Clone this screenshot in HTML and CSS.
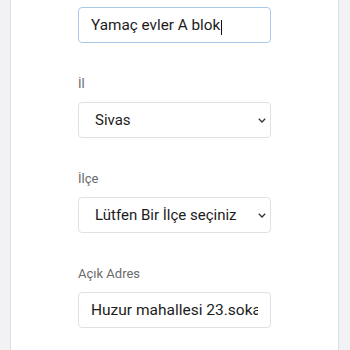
FILE: index.html
```html
<!DOCTYPE html>
<html lang="tr">
<head>
    <meta charset="UTF-8">
    <meta name="viewport" content="width=device-width, initial-scale=1.0">
    <title>Adres Bilgileri</title>
    <link rel="stylesheet" href="styles.css">
</head>
<body>

    <div class="sayfa">
        <div class="alan">
            <div class="secim">
                <input type="text" class="kutu aktif" value="Yamaç evler A blok">
                <span class="imlec"></span>
            </div>
        </div>

        <div class="alan">
            <label for="il">İl</label>
            <div class="secim">
                <select id="il" class="kutu">
                    <option>Sivas</option>
                    <option>Ankara</option>
                    <option>İstanbul</option>
                </select>
                <svg class="ok" width="8" height="5" viewBox="0 0 8 5"><path d="M0.8 0.8l3.2 3.2 3.2-3.2" fill="none" stroke="#333" stroke-width="1.3"/></svg>
            </div>
        </div>

        <div class="alan">
            <label for="ilce">İlçe</label>
            <div class="secim">
                <select id="ilce" class="kutu">
                    <option>Lütfen Bir İlçe seçiniz</option>
                    <option>Merkez</option>
                </select>
                <svg class="ok" width="8" height="5" viewBox="0 0 8 5"><path d="M0.8 0.8l3.2 3.2 3.2-3.2" fill="none" stroke="#333" stroke-width="1.3"/></svg>
            </div>
        </div>

        <div class="alan">
            <label for="adres">Açık Adres</label>
            <input type="text" id="adres" class="kutu adres" value="Huzur mahallesi 23.sokak no:5">
        </div>
    </div>

</body>
</html>
```

FILE: styles.css
```css
* {
    margin: 0;
    padding: 0;
    box-sizing: border-box;
}
body {
    font-family: Roboto, "Noto Sans", Arial, sans-serif;
    background-color: #f2f2f4;
}
.sayfa {
    margin: 0 11px 0 10px;
    min-height: 350px;
    background-color: white;
    border-left: 1px solid #dedee2;
    border-right: 1px solid #dedee2;
    padding: 7px 67px 20px 67px;
}
.alan {
    margin-bottom: 31px;
}
label {
    display: block;
    font-size: 13px;
    line-height: 20px;
    color: #6b6b6b;
    margin-bottom: 8px;
}
.kutu {
    display: block;
    width: 100%;
    height: 36px;
    padding: 0 12px;
    font-family: Roboto, "Noto Sans", Arial, sans-serif;
    font-size: 15px;
    color: #1c1c1c;
    background-color: white;
    border: 1px solid #e1e1e4;
    border-radius: 4px;
    outline: none;
}
.kutu.aktif {
    font-size: 15.3px;
    border-color: #a9cbe9;
}
.kutu.adres {
    font-size: 15.5px;
}
select.kutu {
    appearance: none;
    -webkit-appearance: none;
    padding-left: 16px;
}
.secim {
    position: relative;
}
.ok {
    position: absolute;
    right: 5px;
    top: 16px;
    pointer-events: none;
}
.imlec {
    position: absolute;
    left: 143px;
    top: 13px;
    width: 1px;
    height: 15px;
    background-color: #111;
}
```
